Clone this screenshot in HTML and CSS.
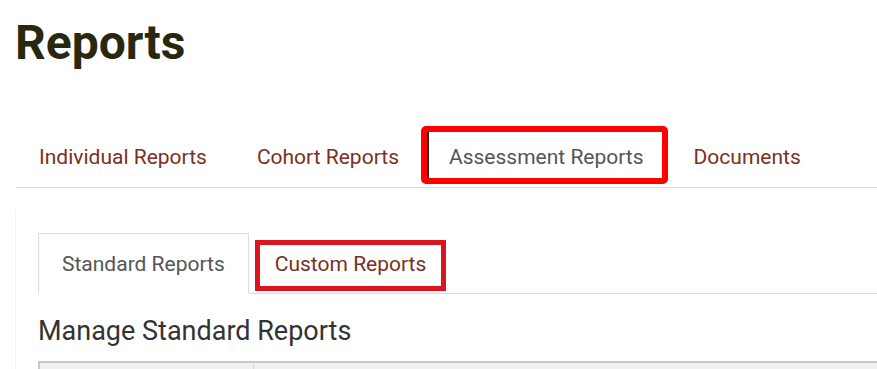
FILE: index.html
```html
<!DOCTYPE html>
<html>

<head>
  <title>Reports</title>
  <link rel="stylesheet" href="styles.css">
</head>

<body>
  <div class="page">
    <h1 class="page-title">Reports</h1>

    <ul class="nav-tabs main-tabs">
      <li><a href="#individual">Individual Reports</a></li>
      <li><a href="#cohort">Cohort Reports</a></li>
      <li class="active flagged"><a href="#assessment">Assessment Reports</a></li>
      <li><a href="#documents">Documents</a></li>
    </ul>

    <div id="assessment" class="tab-pane">
      <ul class="nav-tabs sub-tabs">
        <li class="active"><a href="#standard">Standard Reports</a></li>
        <li class="flagged-thin"><a href="#custom">Custom Reports</a></li>
      </ul>

      <h3 class="section-title">Manage Standard Reports</h3>

      <table class="report-table">
        <thead>
          <tr>
            <th class="col-name"></th>
            <th></th>
          </tr>
        </thead>
      </table>
    </div>
  </div>
</body>

</html>
```

FILE: styles.css
```css
* {
  font-family: Roboto, "Liberation Sans", sans-serif;
  box-sizing: border-box;
}

body {
  margin: 0;
  background-color: #fff;
  overflow: hidden;
}

.page {
  padding-left: 15px;
}

.page-title {
  margin: 15px 0 61px 0;
  font-size: 48px;
  line-height: 56px;
  font-weight: 700;
  color: #28280f;
}

.nav-tabs {
  list-style: none;
  margin: 0;
  padding: 0;
  display: flex;
  border-bottom: 1px solid #ddd;
}

.nav-tabs li {
  position: relative;
  margin-right: 4px;
}

.nav-tabs a {
  display: block;
  font-size: 21px;
  line-height: 25px;
  color: #7a3021;
  text-decoration: none;
}

.nav-tabs .active a {
  color: #555;
}

.main-tabs {
  margin-left: 1px;
}

.main-tabs a {
  padding: 13px 23px 17px;
}

/* red markers drawn over the tabs */
.flagged::after {
  content: "";
  position: absolute;
  left: -5px;
  right: -1px;
  top: -6px;
  bottom: 3px;
  border: 6px solid #ff0000;
  border-radius: 5px;
  box-shadow: inset 2px 0 0 #222;
}

.flagged-thin::after {
  content: "";
  position: absolute;
  left: 4px;
  right: 4px;
  top: 7px;
  bottom: 3px;
  border: 5px solid #dc1420;
}

.tab-pane {
  margin-top: 22px;
  padding: 23px 0 0 22px;
  border-left: 1px solid #f3f3f3;
}

.sub-tabs li {
  margin-right: 2px;
  margin-bottom: -1px;
}

.sub-tabs a {
  padding: 18px 23px 16px;
  border: 1px solid transparent;
}

.sub-tabs .active a {
  background-color: #fff;
  border-color: #ddd #ddd transparent;
}

.section-title {
  margin: 22px 0 15px;
  font-size: 27px;
  line-height: 30px;
  font-weight: 400;
  color: #333;
}

.report-table {
  width: 100%;
  border-collapse: collapse;
}

.report-table th {
  height: 30px;
  background-color: #f0f0f0;
  border-top: 2px solid #c8c8c8;
  border-left: 1px solid #dcdcdc;
}

.report-table .col-name {
  width: 214px;
  border-left: 2px solid #c8c8c8;
}
```
